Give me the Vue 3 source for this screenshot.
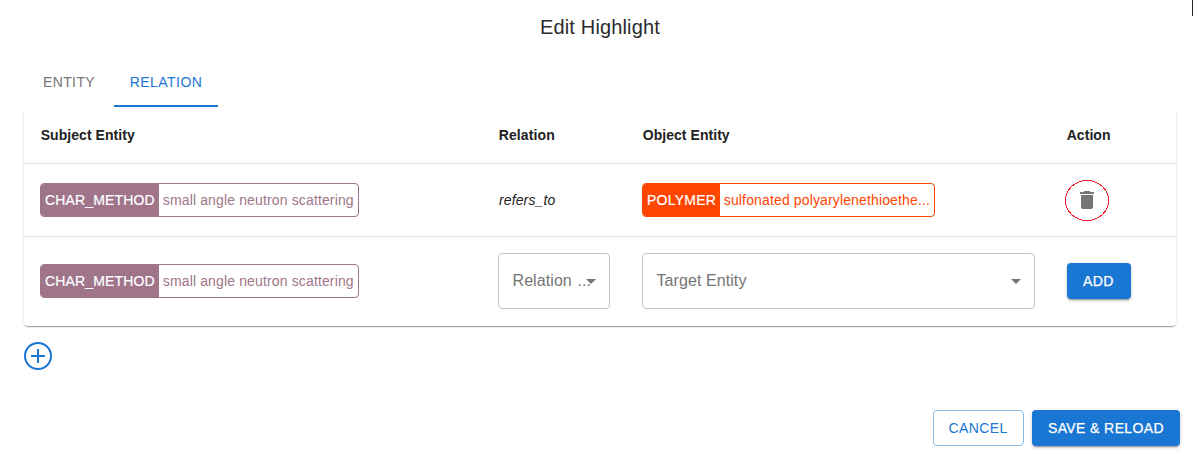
<script setup>
const columns = ['Subject Entity', 'Relation', 'Object Entity', 'Action']
</script>

<template>
  <main class="dialog">
    <h2>Edit Highlight</h2>
    <i class="edge"></i>
    <nav class="tabs"><button>ENTITY</button><button class="active">RELATION</button></nav>
    <section class="table">
      <div class="row head"><div v-for="c in columns" :key="c" class="cell"><span>{{ c }}</span></div></div>
      <div class="row body">
        <div class="cell"><div class="chip method"><b>CHAR_METHOD</b><span>small angle neutron scattering</span></div></div>
        <div class="cell"><em>refers_to</em></div>
        <div class="cell"><div class="chip polymer"><b>POLYMER</b><span>sulfonated polyarylenethioethe...</span></div></div>
        <div class="cell"><button class="trash" aria-label="Delete"><svg width="44" height="42" viewBox="0 0 44 42"><ellipse cx="22" cy="21.5" rx="21.5" ry="20" fill="none" stroke="#ed1c24" shape-rendering="crispEdges"/><path transform="translate(10 9)" fill="#757575" d="M6 19c0 1.1.9 2 2 2h8c1.1 0 2-.9 2-2V7H6v12zM19 4h-3.5l-1-1h-5l-1 1H5v2h14V4z"/></svg></button></div>
      </div>
      <div class="row add">
        <div class="cell"><div class="chip method"><b>CHAR_METHOD</b><span>small angle neutron scattering</span></div></div>
        <div class="cell"><div class="select relation"><span>Relation <i>...</i></span><svg width="24" height="24" viewBox="0 0 24 24"><path d="M7 10l5 5 5-5z"/></svg></div></div>
        <div class="cell"><div class="select target"><span>Target Entity</span><svg width="24" height="24" viewBox="0 0 24 24"><path d="M7 10l5 5 5-5z"/></svg></div></div>
        <div class="cell"><button class="btn filled small">ADD</button></div>
      </div>
    </section>
    <button class="plus" aria-label="Add relation"><svg width="28" height="28" viewBox="0 0 28 28" fill="none" stroke="#1976d2" stroke-width="2"><circle cx="14" cy="14" r="13"/><path d="M7 14h14M14 7v14"/></svg></button>
    <footer><button class="btn outlined">CANCEL</button><button class="btn filled save">SAVE &amp; RELOAD</button></footer>
  </main>
</template>

<style>
body { background: #fff; }
</style>
<style scoped>
* { box-sizing: border-box; }
.dialog { position: relative; width: 1193px; height: 455px; overflow: hidden; font: 14px "Liberation Sans", Arial, sans-serif; color: #212121; }
h2 { margin: 0; height: 59px; padding: 11px 0 0 7px; font-size: 20px; line-height: 32px; font-weight: 400; text-align: center; letter-spacing: .15px; color: #2b2b2b; }
.edge { position: absolute; right: 0; top: 0; width: 1px; height: 16px; background: #222; }
button { border: 0; background: none; padding: 0; font: inherit; color: inherit; }
.tabs { height: 48px; padding-left: 24px; display: flex; }
.tabs button { width: 90px; letter-spacing: .4px; color: #757575; padding-bottom: 2px; }
.tabs .active { width: 104px; color: #1976d2; border-bottom: 2px solid #1976d2; padding: 0; letter-spacing: .45px; }
.table { width: 1152px; height: 219px; margin-left: 24px; border-radius: 4px; box-shadow: 0 2px 1px -1px rgba(0,0,0,.2), 0 1px 1px rgba(0,0,0,.14), 0 1px 3px rgba(0,0,0,.12); }
.row { display: grid; grid-template-columns: 458px 144px 424px 126px; border-bottom: 1px solid #e0e0e0; }
.head { height: 57px; font-weight: 700; letter-spacing: .05px; }
.head span { padding-left: .7px; }
.head .cell:nth-child(2) { letter-spacing: .12px; }
.body { height: 73px; }
.add { height: 88px; border: 0; }
.cell { display: flex; align-items: center; padding-left: 16px; }
em { padding-left: 1px; letter-spacing: .12px; }
.chip { height: 34px; display: flex; border: 1px solid; border-radius: 4px; overflow: hidden; line-height: 32px; white-space: nowrap; }
.chip b { font-weight: 400; color: #fff; padding-left: 4px; letter-spacing: .16px; -webkit-text-stroke: .2px #fff; }
.chip span { flex: 1; padding-left: 3.8px; letter-spacing: .14px; }
.method { width: 319px; color: #a0758a; }
.method b { width: 118px; background: #a0758a; }
.polymer { width: 293px; color: #ff4500; }
.polymer b { width: 77px; background: #ff4500; letter-spacing: .24px; }
.trash { width: 44px; height: 42px; margin: 0 0 0 -1px; }
.trash svg { display: block; }
.select { height: 56px; border: 1px solid #c4c4c4; border-radius: 4px; display: flex; align-items: center; justify-content: space-between; padding: 0 6px 0 13.5px; font-size: 16px; color: #757575; white-space: nowrap; }
.select span { letter-spacing: .08px; margin-top: -1px; }
.select i { font-style: normal; margin-left: 1px; }
.select svg { fill: #757575; flex: none; }
.relation { width: 112px; }
.relation svg { margin-left: -16px; }
.target { width: 393px; }
.btn { height: 36px; border-radius: 4px; letter-spacing: .4px; }
.filled { background: #1976d2; color: #fff; -webkit-text-stroke: .25px #fff; box-shadow: 0 3px 1px -2px rgba(0,0,0,.2), 0 2px 2px rgba(0,0,0,.14), 0 1px 5px rgba(0,0,0,.12); }
.small { width: 64px; margin-left: 1px; padding-right: 1px; }
.plus { display: block; width: 28px; height: 28px; margin: 16px 0 0 24px; }
.plus svg { display: block; }
footer { display: flex; justify-content: flex-end; gap: 8px; padding-right: 13px; margin-top: 40px; }
.outlined { width: 91px; border: 1px solid #8cbbe9; color: #1976d2; padding-right: 1px; }
.save { width: 148px; }
</style>
